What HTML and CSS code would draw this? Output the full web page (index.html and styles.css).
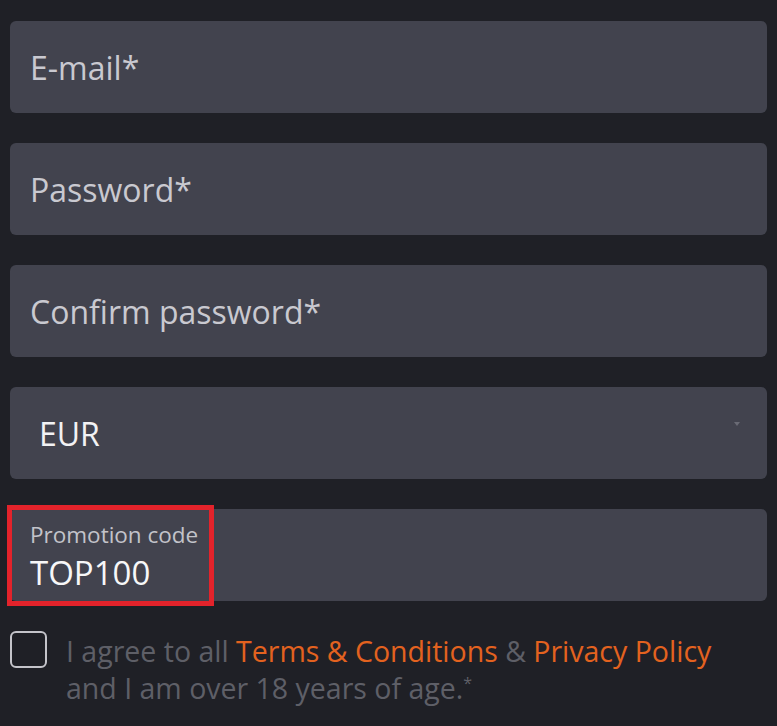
FILE: index.html
```html
<html>
<head>
    <title>Registration</title>
    <link rel="stylesheet" href="styles.css">
</head>
<body>
<form class="reg">
    <div class="field"><span class="placeholder">E-mail*</span></div>
    <div class="field"><span class="placeholder">Password*</span></div>
    <div class="field"><span class="placeholder">Confirm password*</span></div>
    <div class="field select">
        <span class="value">EUR</span>
        <span class="arrow"></span>
    </div>
    <div class="field promo">
        <div class="promo-box">
            <span class="label">Promotion code</span>
            <span class="code">TOP100</span>
        </div>
    </div>
    <div class="agree">
        <span class="check"></span>
        <p class="agree-text">I agree to all <a>Terms &amp; Conditions</a> &amp; <a>Privacy Policy</a><br>and I am over 18 years of age.<sup>*</sup></p>
    </div>
</form>
</body>
</html>
```

FILE: styles.css
```css
body{
    margin: 0;
    background-color: #1f2026;
    font-family: "Open Sans", "Noto Sans", sans-serif;
}

.reg{
    margin: 0;
    padding: 21px 10px 0 10px;
    display: flex;
    flex-direction: column;
    gap: 30px;
}

.field{
    height: 92px;
    background-color: #42434e;
    border-radius: 6px;
    display: flex;
    align-items: center;
    padding: 0 20px;
    position: relative;
}

.placeholder{
    font-size: 32px;
    color: #c9c9d0;
}

.select .value{
    font-size: 32px;
    color: #f2f2f4;
    margin-left: 9px;
}

.arrow{
    position: absolute;
    right: 27px;
    top: 35px;
    width: 0;
    height: 0;
    border-left: 3px solid transparent;
    border-right: 3px solid transparent;
    border-top: 4px solid #6a6b75;
}

.promo{
    padding: 0;
    align-items: stretch;
}

.promo-box{
    box-sizing: border-box;
    margin: -4px 0 -5px -3px;
    width: 207px;
    border: 5px solid #e3232b;
    display: flex;
    flex-direction: column;
    padding: 9px 0 0 18px;
}

.label{
    font-size: 22.5px;
    color: #c3c3ca;
    line-height: 31px;
}

.code{
    font-size: 33px;
    color: #f7f7f8;
    line-height: 45px;
}

.agree{
    display: flex;
    align-items: flex-start;
}

.check{
    width: 33px;
    height: 33px;
    border: 2px solid #c4c4ca;
    border-radius: 6px;
    flex-shrink: 0;
}

.agree-text{
    margin: 2px 0 0 19px;
    font-size: 28.5px;
    line-height: 37px;
    color: #5e5f67;
}

.agree-text a{
    color: #e3621f;
}

.agree-text sup{
    font-size: 16px;
    line-height: 0;
}
```
